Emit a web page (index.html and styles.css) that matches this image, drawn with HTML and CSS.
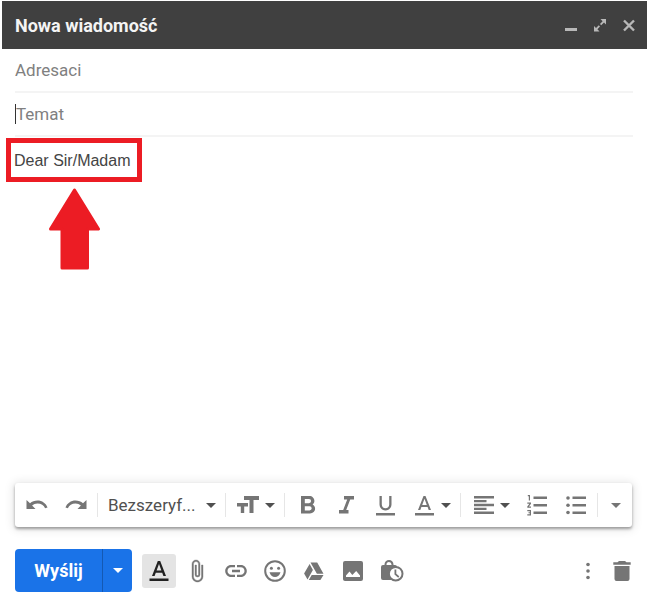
FILE: index.html
```html
<!DOCTYPE html>
<html lang="pl">
<head>
  <meta charset="UTF-8">
  <meta name="viewport" content="width=device-width, initial-scale=1.0">
  <title>Nowa wiadomość</title>
  <link rel="stylesheet" href="styles.css">
</head>
<body>
  <form class="compose">
    <header class="header">
      <h1>Nowa wiadomość</h1>
      <div class="window-buttons">
        <button type="button" aria-label="Minimalizuj">
          <svg width="14" height="14" viewBox="0 0 14 14"><path d="M1 10h12v3H1z"/></svg>
        </button>
        <button type="button" aria-label="Pełny ekran">
          <svg width="14" height="14" viewBox="0 0 14 14"><path d="M7.500 1H13v5.500l-2-2-2.800 2.800-1.200-1.200L9.600 3.200zM1 8l2 2 2.800-2.800L7 8.400 4.400 11.300l2.100 2.200H1z"/></svg>
        </button>
        <button type="button" aria-label="Zamknij">
          <svg width="14" height="14" viewBox="0 0 14 14"><path d="M2 2.500l10 10M12 2.500l-10 10" stroke="#b8b8b8" stroke-width="2.400"/></svg>
        </button>
      </div>
    </header>

    <div class="fields">
      <div class="field">
        <input type="text" aria-label="Adresaci" placeholder="Adresaci">
      </div>
      <div class="field active">
        <input type="text" aria-label="Temat" placeholder="Temat">
      </div>
    </div>

    <div class="message">
      <textarea aria-label="Treść wiadomości">Dear Sir/Madam</textarea>
      <div class="highlight"></div>
      <svg class="arrow" width="54" height="84" viewBox="0 0 54 84"><path d="M26.500 3L50.500 42H39.500V81H14V42H2.500z"/></svg>
    </div>

    <div class="toolbar">
      <button type="button" class="tool" aria-label="Cofnij">
        <svg width="24" height="24" viewBox="0 0 24 24"><path d="M12.500 7.500c-2.900 0-5.500 1-7.500 2.800L1.500 7v9h9l-3.400-3.400c1.500-1.300 3.300-2.100 5.400-2.100 3.500 0 6.500 1.700 7.600 4.800l2.400-.8c-1.600-4.300-5.400-7-10-7z"/></svg>
      </button>
      <button type="button" class="tool" aria-label="Ponów">
        <svg width="24" height="24" viewBox="0 0 24 24"><path d="M11.500 7.500c2.900 0 5.500 1 7.500 2.800L22.500 7v9h-9l3.400-3.400c-1.500-1.300-3.300-2.100-5.400-2.100-3.500 0-6.500 1.700-7.600 4.800l-2.400-.8c1.600-4.300 5.400-7 10-7z"/></svg>
      </button>
      <span class="separator"></span>
      <div class="font-picker">
        <select aria-label="Czcionka">
          <option>Bezszeryf...</option>
        </select>
        <svg class="caret" width="10" height="5" viewBox="0 0 10 5"><path d="M0 0h10L5 5z"/></svg>
      </div>
      <span class="separator"></span>
      <button type="button" class="tool menu" aria-label="Rozmiar">
        <svg width="24" height="24" viewBox="0 0 24 24"><path d="M8 3h15v4h-5.500v13h-4V7H8zM1 10h11v3.500H8.200V20H4.800v-6.500H1z"/></svg>
        <svg class="caret" width="10" height="5" viewBox="0 0 10 5"><path d="M0 0h10L5 5z"/></svg>
      </button>
      <span class="separator"></span>
      <button type="button" class="tool" aria-label="Pogrubienie">
        <svg width="24" height="24" viewBox="0 0 24 24"><path d="M17.600 11.500c1.100-.8 1.800-2 1.800-3.500 0-2.900-2.200-5-5-5H6v17.500h9c2.900 0 5.100-2.200 5.100-4.700 0-2.100-1-3.500-2.500-4.300zM9.800 6H14a2 2 0 0 1 0 4.200H9.800zm4.700 11.500H9.800v-4.300h4.700a2.150 2.150 0 0 1 0 4.300z"/></svg>
      </button>
      <button type="button" class="tool" aria-label="Kursywa">
        <svg width="24" height="24" viewBox="0 0 24 24"><path d="M10 3v3.500h3.200L9.200 17H5v3.500h9.500V17h-2.300l4-10.500H20V3z"/></svg>
      </button>
      <button type="button" class="tool" aria-label="Podkreślenie">
        <svg width="24" height="24" viewBox="0 0 24 24"><path d="M12.500 17.500c3.400 0 6-2.600 6-6V3h-2.300v8.500c0 2.200-1.500 3.700-3.700 3.700s-3.700-1.500-3.700-3.700V3H6.500v8.500c0 3.400 2.600 6 6 6zM3 20v2.500h19V20z"/></svg>
      </button>
      <button type="button" class="tool menu" aria-label="Kolor tekstu">
        <svg width="24" height="24" viewBox="0 0 24 24"><path d="M3 20h19v2.500H3zM11.500 3L6 17h2.300l1.100-3h6.200l1.100 3H19L13.500 3zm-1.300 9l2.300-6.300 2.300 6.300z"/></svg>
        <svg class="caret" width="10" height="5" viewBox="0 0 10 5"><path d="M0 0h10L5 5z"/></svg>
      </button>
      <span class="separator"></span>
      <button type="button" class="tool menu" aria-label="Wyrównanie">
        <svg width="24" height="24" viewBox="0 0 24 24"><path d="M3 3h20v2.500H3zM3 7h12.500v2.300H3zM3 10.800h20v2.400H3zM3 14.700h12.500V17H3zM3 18.500h20V21H3z"/></svg>
        <svg class="caret" width="10" height="5" viewBox="0 0 10 5"><path d="M0 0h10L5 5z"/></svg>
      </button>
      <button type="button" class="tool" aria-label="Lista numerowana">
        <svg width="24" height="24" viewBox="0 0 24 24"><path d="M8.500 3.500H22V6H8.500zM8.500 11H22v2.500H8.500zM8.500 18.500H22V21H8.500zM3.500 2H5v5.500H3.800V3.200h-1V2zM2.300 9.500h3.700v1.200l-2.100 2.800H6v1.200H2.300v-1.200l2.100-2.800H2.300zM2.300 17H6v5.500H2.300v-1.200h2.500v-1h-1.300v-1h1.300v-1.100H2.300z"/></svg>
      </button>
      <button type="button" class="tool" aria-label="Lista punktowana">
        <svg width="24" height="24" viewBox="0 0 24 24"><path d="M8.500 3.500H22V6H8.500zM8.500 11H22v2.500H8.500zM8.500 18.500H22V21H8.500z"/><circle cx="4" cy="5" r="1.800"/><circle cx="4" cy="12.200" r="1.800"/><circle cx="4" cy="19.500" r="1.800"/></svg>
      </button>
      <span class="separator"></span>
      <button type="button" class="tool more" aria-label="Więcej opcji formatowania">
        <svg width="10" height="5" viewBox="0 0 10 5"><path d="M0 0h10L5 5z"/></svg>
      </button>
    </div>

    <footer class="actions">
      <div class="send">
        <button type="submit" class="send-button">Wyślij</button>
        <button type="button" class="send-menu" aria-label="Więcej opcji wysyłania">
          <svg width="10" height="5" viewBox="0 0 10 5"><path d="M0 0h10L5 5z"/></svg>
        </button>
      </div>
      <button type="button" class="format" aria-label="Opcje formatowania">
        <svg width="24" height="24" viewBox="0 0 24 24"><path d="M2.500 19.500h19V22h-19zM10.800 2L5 17h2.600l1.200-3.200h6.400l1.200 3.200H19L13.200 2zm-1.200 9.500L12 5l2.400 6.500z"/></svg>
      </button>
      <div class="inserts">
        <button type="button" class="tool" aria-label="Załącz pliki">
          <svg width="24" height="24" viewBox="0 0 24 24"><path d="M16.500 6v11.500c0 2.210-1.790 4-4 4s-4-1.790-4-4V5a2.500 2.500 0 0 1 5 0v10.500c0 .55-.45 1-1 1s-1-.45-1-1V6H10v9.500a2.500 2.500 0 0 0 5 0V5c0-2.210-1.790-4-4-4S7 2.790 7 5v12.500c0 3.040 2.460 5.500 5.500 5.500s5.500-2.460 5.500-5.500V6h-1.500z" stroke="#757575" stroke-width=".4"/></svg>
        </button>
        <button type="button" class="tool" aria-label="Wstaw link">
          <svg width="24" height="24" viewBox="0 0 24 24"><path d="M3.500 12c0-2 1.600-3.700 3.600-3.700H11V6H7.100C3.900 6 1.200 8.700 1.200 12s2.700 6 5.900 6H11v-2.300H7.100c-2 0-3.600-1.700-3.600-3.700zM8 13.200h8v-2.400H8zM16.900 6H13v2.300h3.900c2 0 3.600 1.700 3.600 3.700s-1.600 3.700-3.600 3.700H13V18h3.900c3.200 0 5.900-2.700 5.900-6s-2.700-6-5.900-6z"/></svg>
        </button>
        <button type="button" class="tool" aria-label="Wstaw emotikon">
          <svg width="24" height="24" viewBox="0 0 24 24"><circle cx="12" cy="12" r="9.800" fill="none" stroke="#757575" stroke-width="2"/><circle cx="8.400" cy="9.300" r="1.500"/><circle cx="15.600" cy="9.300" r="1.500"/><path d="M6.500 13.300h11c-.8 2.900-2.900 4.700-5.500 4.700s-4.700-1.800-5.500-4.700z"/></svg>
        </button>
        <button type="button" class="tool" aria-label="Wstaw z Dysku">
          <svg width="24" height="24" viewBox="0 0 24 24"><path d="M8.500 3.500h6.700l6.300 11.200h-6.600zM7.600 5l3.300 5.900-5.400 9.500-3.400-5.900zM9.700 16h11.800l-3.100 5H6.800z"/></svg>
        </button>
        <button type="button" class="tool" aria-label="Wstaw zdjęcie">
          <svg width="24" height="24" viewBox="0 0 24 24"><path d="M20 2H4a2 2 0 0 0-2 2v16c0 1.100.9 2 2 2h16a2 2 0 0 0 2-2V4a2 2 0 0 0-2-2zM5 18v-1.500l3.500-4 2.800 3.500 3.900-4 3.800 4.500V18z"/></svg>
        </button>
        <button type="button" class="tool" aria-label="Tryb poufny">
          <svg width="24" height="24" viewBox="0 0 24 24"><path d="M4.500 6V5.500a4.500 4.500 0 0 1 9 0V6H15a2 2 0 0 1 2 2v6l-6 7H3a2 2 0 0 1-2-2V8a2 2 0 0 1 2-2zM6.500 6h5v-.5a2.500 2.500 0 0 0-5 0z"/><circle cx="15.700" cy="14.700" r="6.800" fill="#fff" stroke="#757575" stroke-width="2"/><path d="M14.500 10.500h1.800v4.200l3 2.600-1.100 1.400-3.700-3.200z"/></svg>
        </button>
      </div>
      <div class="extras">
        <button type="button" class="tool" aria-label="Więcej opcji">
          <svg width="24" height="24" viewBox="0 0 24 24"><circle cx="12" cy="5.500" r="1.800"/><circle cx="12" cy="12" r="1.800"/><circle cx="12" cy="18.500" r="1.800"/></svg>
        </button>
        <button type="button" class="tool" aria-label="Odrzuć wersję roboczą">
          <svg width="24" height="24" viewBox="0 0 24 24"><path d="M4.500 7h15v13a2 2 0 0 1-2 2h-11a2 2 0 0 1-2-2zM3.300 3.200h4.200L9 2h6l1.500 1.200h4.200v2.500H3.300z"/></svg>
        </button>
      </div>
    </footer>
  </form>
</body>
</html>
```
FILE: styles.css
```css
* {
  box-sizing: border-box;
}
body {
  margin: 0;
  background-color: #fff;
  font-family: Roboto, Arial, sans-serif;
  color: #505050;
}
button {
  display: flex;
  align-items: center;
  justify-content: center;
  padding: 0;
  border: none;
  background: none;
  font-family: inherit;
  cursor: pointer;
}
svg {
  display: block;
  flex: none;
  fill: #757575;
}
.compose {
  display: flex;
  flex-direction: column;
  min-height: 100vh;
}

/* Title bar */
.header {
  display: flex;
  align-items: center;
  justify-content: space-between;
  height: 48px;
  margin: 1px 0 0 2px;
  padding: 0 11px 0 13px;
  background-color: #404040;
}
.header h1 {
  margin: 0;
  font-size: 18px;
  font-weight: 700;
  color: #f4f4f4;
}
.window-buttons {
  display: flex;
  gap: 15px;
}
.window-buttons svg {
  fill: #b8b8b8;
}

/* Recipients and subject */
.fields {
  padding: 0 14px 0 15px;
}
.field {
  display: flex;
  align-items: center;
  height: 44px;
  border-bottom: 2px solid #f4f4f4;
}
.field input {
  flex: 1;
  min-width: 0;
  padding: 0;
  border: none;
  outline: none;
  font-family: inherit;
  font-size: 17px;
}
.field input::placeholder {
  color: #808080;
  opacity: 1;
}
.active::before {
  content: "";
  width: 1px;
  height: 20px;
  background-color: #333;
}

/* Message body */
.message {
  position: relative;
  display: flex;
  flex: 1;
}
.message textarea {
  flex: 1;
  padding: 14px;
  border: none;
  outline: none;
  resize: none;
  background: none;
  font-family: "Liberation Sans", Arial, sans-serif;
  font-size: 16px;
  line-height: 20px;
  color: #444;
}
.highlight {
  position: absolute;
  top: 1px;
  left: 6px;
  width: 136px;
  height: 44px;
  border: 5px solid #ec1c24;
  pointer-events: none;
}
.arrow {
  position: absolute;
  top: 50px;
  left: 48px;
  fill: #ec1c24;
  stroke: #ec1c24;
  stroke-width: 3px;
  stroke-linejoin: round;
  pointer-events: none;
}

/* Formatting toolbar */
.toolbar {
  display: flex;
  align-items: center;
  height: 44px;
  margin: 0 15px;
  padding-left: 2px;
  border-radius: 3px;
  background-color: #fff;
  box-shadow: 0 2px 3px rgba(0, 0, 0, 0.35), 0 1px 10px 2px rgba(0, 0, 0, 0.1);
}
.tool {
  width: 39px;
  height: 34px;
}
.menu {
  justify-content: flex-start;
  gap: 5px;
  width: 54px;
  padding-left: 8px;
}
.more {
  flex: 1;
}
.caret {
  fill: #505050;
}
.separator {
  width: 1px;
  height: 24px;
  margin: 0 2px;
  background-color: #e6e6e6;
}
.font-picker {
  display: flex;
  align-items: center;
  width: 123px;
  padding: 0 7px 0 8px;
}
.font-picker select {
  flex: 1;
  min-width: 0;
  padding: 0;
  border: none;
  outline: none;
  appearance: none;
  background: none;
  font-family: inherit;
  font-size: 17px;
  color: #505050;
}

/* Send row */
.actions {
  display: flex;
  align-items: center;
  padding: 22px 8px 10px 15px;
}
.send {
  display: flex;
  height: 43px;
  border-radius: 4px;
  background-color: #1a73e8;
}
.send-button {
  width: 87px;
  font-size: 18px;
  font-weight: 700;
  color: #fff;
}
.send-menu {
  width: 30px;
  border-left: 1px solid #1459b3;
}
.send-menu svg {
  fill: #fff;
}
.format {
  width: 34px;
  height: 34px;
  margin: 0 1px 0 10px;
  border-radius: 3px;
  background-color: #e4e4e4;
}
.format svg {
  fill: #222;
}
.inserts {
  display: flex;
}
.extras {
  display: flex;
  margin-left: auto;
}
.extras .tool {
  width: 34px;
}
```
